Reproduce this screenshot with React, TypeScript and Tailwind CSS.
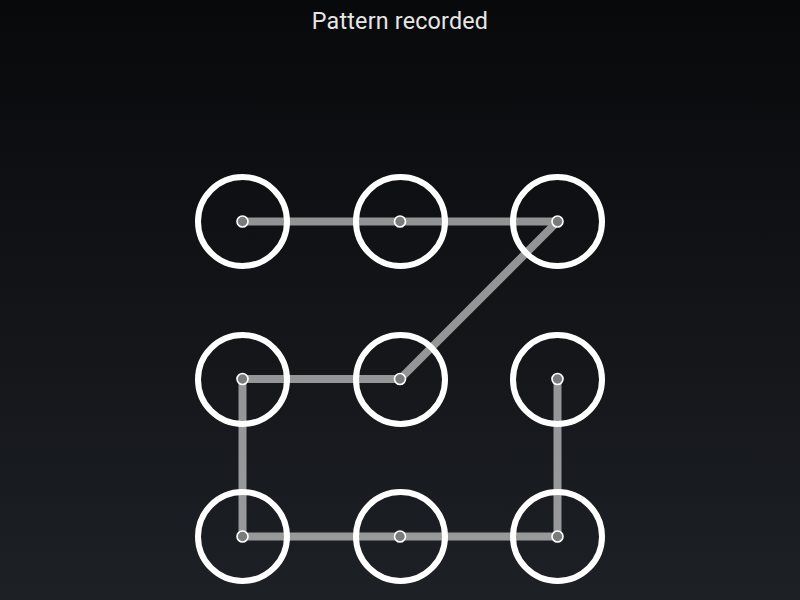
import React from 'react';

// Node centres inside the 410x410 pattern box (ring 95px, gap 62.5px)
const STEP = 157.5;
const HALF = 47.5;
const pos = (i: number) => ({ x: HALF + (i % 3) * STEP, y: HALF + Math.floor(i / 3) * STEP });

// Recorded path: 0-1-2-4-3-6-7-8-5
const path = [0, 1, 2, 4, 3, 6, 7, 8, 5];

export default function App() {
  const points = path.map(i => { const p = pos(i); return `${p.x},${p.y}`; }).join(' ');

  return (
    <div className="w-[800px] h-[600px] overflow-hidden flex flex-col items-center bg-gradient-to-b from-[#08090b] to-[#1d2025] font-['Roboto','Liberation_Sans',sans-serif]">
      <div className="pt-[5px] h-[40px] text-[23.3px] leading-[33px] text-[#e6e6e6] tracking-[0.2px]">Pattern recorded</div>

      <div className="relative mt-[134px] w-[410px] h-[410px]">
        <div className="grid grid-cols-[95px_95px_95px] grid-rows-[95px_95px_95px] gap-[62.5px]">
          {Array.from({ length: 9 }).map((_, i) => (
            <div key={i} className="w-[95px] h-[95px] rounded-full border-[6px] border-white" />
          ))}
        </div>

        <svg className="absolute inset-0" width="410" height="410" viewBox="0 0 410 410">
          <polyline
            points={points}
            fill="none"
            stroke="rgba(255,255,255,0.55)"
            strokeWidth="8"
            strokeLinejoin="round"
            strokeLinecap="butt"
          />
          {path.map(i => {
            const p = pos(i);
            return <circle key={i} cx={p.x} cy={p.y} r="5.5" fill="#7a7b7d" stroke="#ffffff" strokeWidth="1.6" />;
          })}
        </svg>
      </div>
    </div>
  );
}
